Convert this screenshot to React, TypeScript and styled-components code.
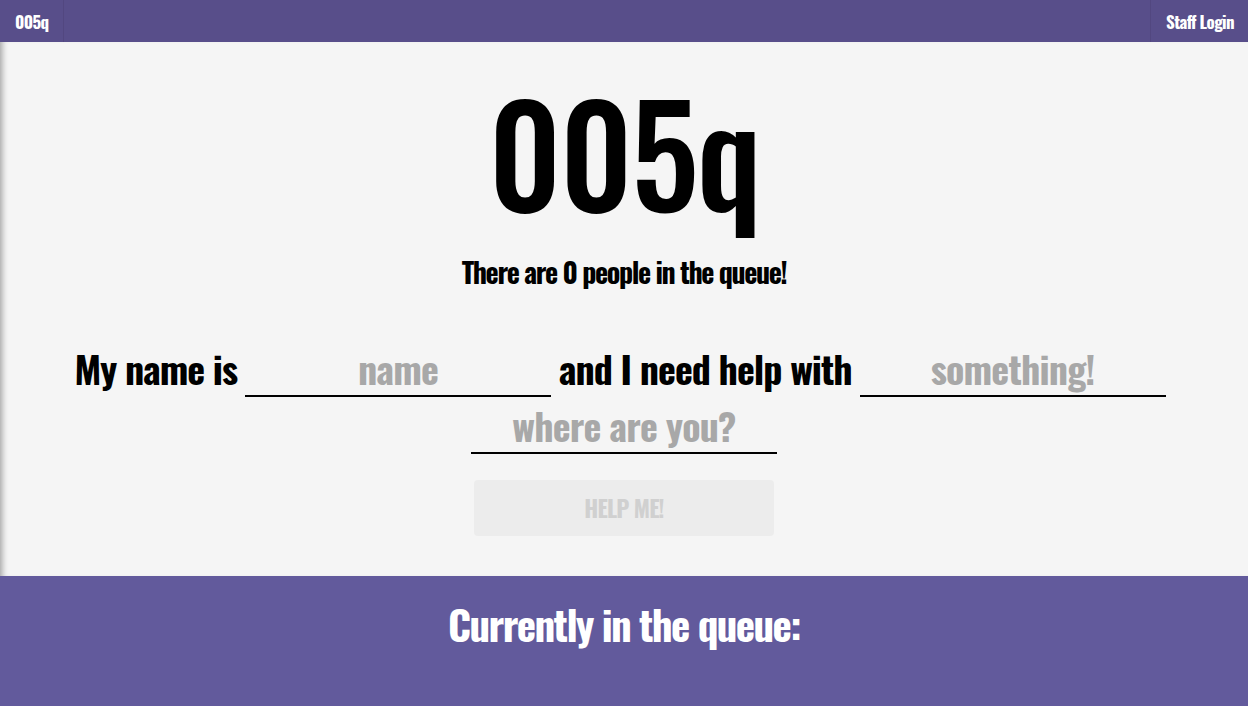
import React from 'react';
import styled, { createGlobalStyle } from 'styled-components';

const GlobalStyle = createGlobalStyle`
  html, body {
    margin: 0;
    padding: 0;
    background: #f5f5f5;
  }
  body {
    font-family: Oswald, "Roboto Condensed", "Open Sans Condensed", sans-serif;
    color: #000;
  }
`;

const Page = styled.div`
  display: flex;
  flex-direction: column;
  height: 706px;
  overflow: hidden;
`;

const Navbar = styled.nav`
  height: 42px;
  background: #584e8a;
  display: flex;
  justify-content: space-between;
  align-items: stretch;
  flex-shrink: 0;
`;

const NavItem = styled.a<{ $side: 'left' | 'right' }>`
  display: flex;
  align-items: center;
  padding: 0 14px 0 15px;
  color: #fff;
  font-weight: 700;
  font-size: 17px;
  letter-spacing: -0.6px;
  text-decoration: none;
  border-${(p) => (p.$side === 'left' ? 'right' : 'left')}: 1px solid #524780;
`;

const Main = styled.main`
  flex: 1;
  display: flex;
  flex-direction: column;
  align-items: center;
  box-shadow: inset 7px 0 6px -5px rgba(0, 0, 0, 0.35);
`;

const Title = styled.h1`
  margin: 29px 0 0;
  font-size: 137px;
  line-height: 160px;
  font-weight: 500;
  letter-spacing: -2px;
`;

const Subtitle = styled.h2`
  margin: 23px 0 0;
  font-size: 28px;
  line-height: 36px;
  font-weight: 700;
  letter-spacing: -1.4px;
`;

const Form = styled.form`
  margin-top: 53px;
  display: flex;
  flex-direction: column;
  align-items: center;
`;

const FormRow = styled.div<{ $offset?: number; $trail?: number }>`
  display: flex;
  align-items: flex-end;
  gap: 8px;
  margin-top: ${(p) => p.$offset ?? 0}px;
  padding-right: ${(p) => p.$trail ?? 0}px;
`;

const Label = styled.span`
  font-size: 38px;
  font-weight: 700;
  letter-spacing: -1px;
  line-height: 50px;
  padding-bottom: 4px;
`;

const Field = styled.input`
  width: 306px;
  height: 52px;
  box-sizing: border-box;
  border: none;
  border-bottom: 2px solid #000;
  background: transparent;
  font-family: inherit;
  font-size: 38px;
  font-weight: 700;
  letter-spacing: -0.8px;
  text-align: center;
  outline: none;
  padding: 0 0 4px;
  &::placeholder {
    color: #a8a8a8;
  }
`;

const Button = styled.button`
  margin-top: 26px;
  width: 300px;
  height: 56px;
  border: none;
  border-radius: 4px;
  background: #ececec;
  color: #d0d0d0;
  font-family: inherit;
  font-size: 23px;
  font-weight: 700;
  letter-spacing: -0.8px;
  cursor: not-allowed;
`;

const QueueSection = styled.section`
  height: 130px;
  flex-shrink: 0;
  background: #625a9c;
  display: flex;
  justify-content: center;
`;

const QueueTitle = styled.h2`
  margin: 17px 0 0;
  color: #fff;
  font-size: 41px;
  font-weight: 700;
  letter-spacing: -1.6px;
`;

const App: React.FC = () => (
  <Page>
    <GlobalStyle />
    <Navbar>
      <NavItem $side="left" href="#">005q</NavItem>
      <NavItem $side="right" href="#">Staff Login</NavItem>
    </Navbar>
    <Main>
      <Title>005q</Title>
      <Subtitle>There are 0 people in the queue!</Subtitle>
      <Form onSubmit={(e) => e.preventDefault()}>
        <FormRow $trail={8}>
          <Label>My name is</Label>
          <Field placeholder="name" />
          <Label>and I need help with</Label>
          <Field placeholder="something!" />
        </FormRow>
        <FormRow $offset={5}>
          <Field placeholder="where are you?" />
        </FormRow>
        <Button type="submit" disabled>HELP ME!</Button>
      </Form>
    </Main>
    <QueueSection>
      <QueueTitle>Currently in the queue:</QueueTitle>
    </QueueSection>
  </Page>
);

export default App;
